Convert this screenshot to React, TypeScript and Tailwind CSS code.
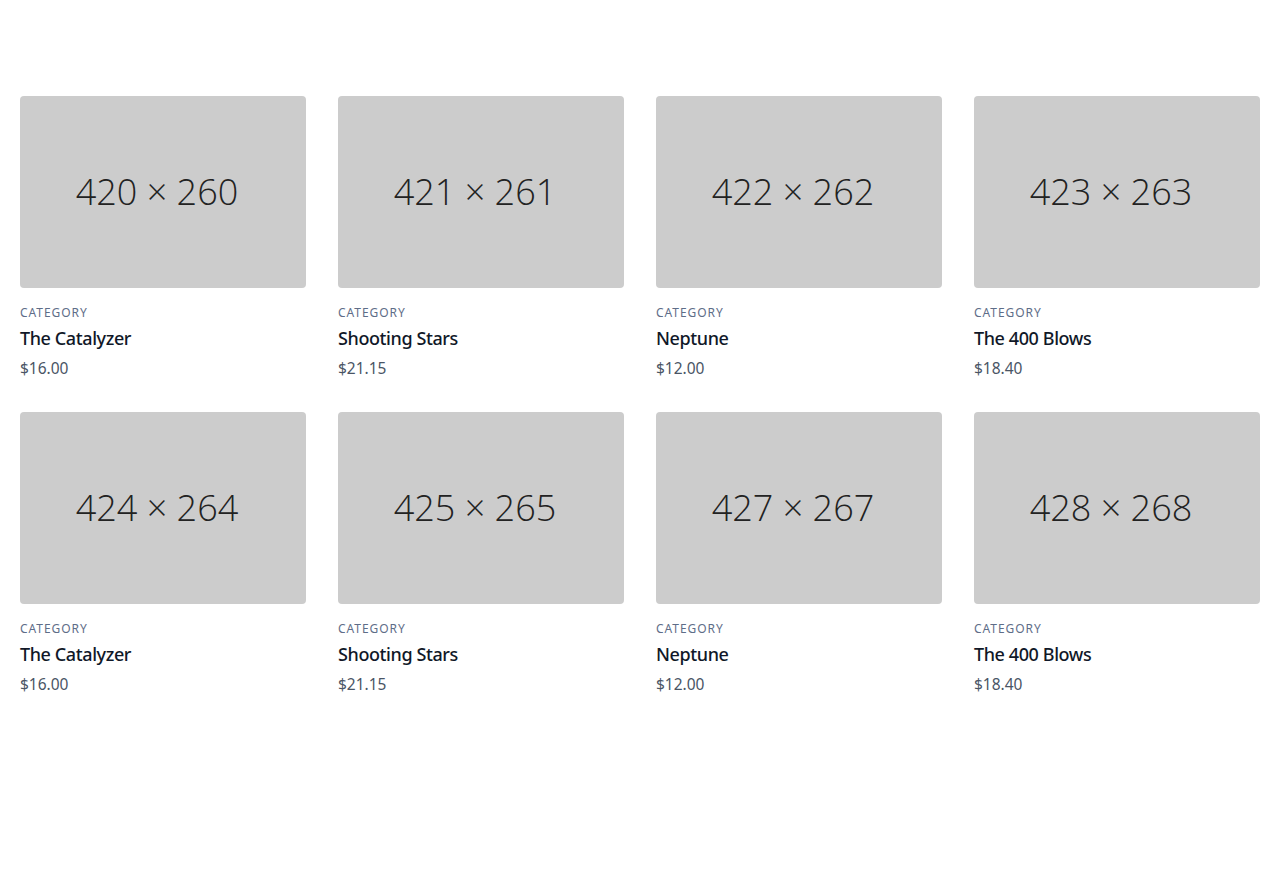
import React from "react";

const items = [
  { cat: "CATEGORY", title: "The Catalyzer", price: "$16.00", img: "420 × 260" },
  { cat: "CATEGORY", title: "Shooting Stars", price: "$21.15", img: "421 × 261" },
  { cat: "CATEGORY", title: "Neptune", price: "$12.00", img: "422 × 262" },
  { cat: "CATEGORY", title: "The 400 Blows", price: "$18.40", img: "423 × 263" },
  { cat: "CATEGORY", title: "The Catalyzer", price: "$16.00", img: "424 × 264" },
  { cat: "CATEGORY", title: "Shooting Stars", price: "$21.15", img: "425 × 265" },
  { cat: "CATEGORY", title: "Neptune", price: "$12.00", img: "427 × 267" },
  { cat: "CATEGORY", title: "The 400 Blows", price: "$18.40", img: "428 × 268" },
];

export default function App() {
  return (
    <section className="bg-white text-[#4a5565] font-['Noto_Sans',sans-serif]">
      <div className="mx-auto w-[1280px] px-5 py-24">
        <div className="-m-4 flex flex-wrap">
          {items.map((it, i) => (
            <div key={i} className="w-1/4 p-4">
              <div className="flex h-48 w-full items-center justify-center overflow-hidden rounded bg-[#cccccc] pr-3">
                <span className="font-['Open_Sans',sans-serif] text-[36px] font-light leading-none text-[#222222]">{it.img}</span>
              </div>
              <div className="mt-4">
                <h3 className="mb-1 pt-px text-xs leading-4 tracking-[0.08em] text-[#5e6d88]">{it.cat}</h3>
                <h2 className="-mt-px text-lg leading-7 font-medium tracking-[-0.4px] text-[#101828]">{it.title}</h2>
                <p className="mt-1 text-[15.5px] leading-6 text-[#4a5565]">{it.price}</p>
              </div>
            </div>
          ))}
        </div>
      </div>
    </section>
  );
}
